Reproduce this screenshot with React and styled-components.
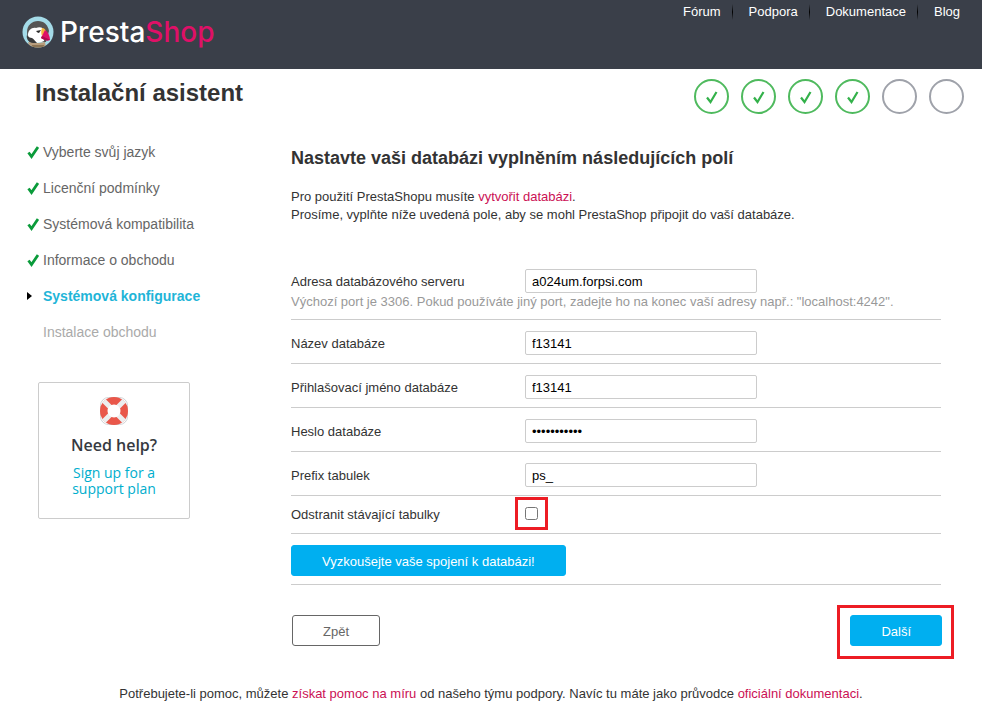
import { useState } from "react";
import styled, { createGlobalStyle } from "styled-components";

const nav_links = ["Fórum", "Podpora", "Dokumentace", "Blog"];

const steps = [
  { name: "Vyberte svůj jazyk", status: "done" },
  { name: "Licenční podmínky", status: "done" },
  { name: "Systémová kompatibilita", status: "done" },
  { name: "Informace o obchodu", status: "done" },
  { name: "Systémová konfigurace", status: "active" },
  { name: "Instalace obchodu", status: "waiting" },
];

const fields = [
  {
    id: "dbServer",
    label: "Adresa databázového serveru",
    value: "a024um.forpsi.com",
    hint: 'Výchozí port je 3306. Pokud používáte jiný port, zadejte ho na konec vaší adresy např.: "localhost:4242".',
  },
  { id: "dbName", label: "Název databáze", value: "f13141" },
  { id: "dbLogin", label: "Přihlašovací jméno databáze", value: "f13141" },
  { id: "dbPassword", label: "Heslo databáze", value: "abcdefghijk", type: "password" },
  { id: "dbPrefix", label: "Prefix tabulek", value: "ps_" },
];

function Puffin() {
  return (
    <svg width="32" height="32" viewBox="0 0 32 32" aria-hidden="true">
      <defs>
        <clipPath id="puffinClip">
          <circle cx="16" cy="16" r="15.5" />
        </clipPath>
      </defs>
      <g clipPath="url(#puffinClip)">
        <rect width="32" height="32" fill="#a4dbe8" />
        <path d="M5 16C5 9 10 5 16 5s10 4 11 10l-3 11H8c-2-2-3-6-3-10z" fill="#565554" />
        <path d="M6 19c0-5 4-8 8-7 4-2 8 0 9 3l-1 10c-4 2-8 2-11 1-3-2-5-4-5-7z" fill="#fff" />
        <path d="M5 19c1 2 3 3 5 3 2 1 3 3 5 5H9c-3-2-5-5-4-8z" fill="#3a3a3b" />
        <path d="M14 15l5-1-2 3c-1 0-2-1-3-2z" fill="#2b2b2b" />
        <path d="M20 12c2 0 3 1 4 3l-4 5c-1-2-1-6 0-8z" fill="#f4b53c" />
        <path d="M23 14c3 2 5 6 5 10-3 1-6 0-9-2z" fill="#df1067" />
        <path d="M20 20c2 1 5 2 8 4-3 1-6 0-9-2z" fill="#ae0c50" />
        <path d="M6 26l5 1c4 0 8 0 12-1l1 6H8z" fill="#b89d7d" />
        <path d="M10 29h12v3H10z" fill="#8c7454" />
      </g>
    </svg>
  );
}

function Lifebuoy() {
  return (
    <svg width="28" height="28" viewBox="0 0 28 28" aria-hidden="true">
      <rect x="0.500" y="0.500" width="27" height="27" rx="8" fill="#fff" stroke="#d0d3d6" />
      <circle cx="14" cy="14" r="10" fill="none" stroke="#e9574a" strokeWidth="8" />
      <path d="M4 4l20 20M24 4L4 24" stroke="#eceeef" strokeWidth="5" />
      <circle cx="14" cy="14" r="6.500" fill="#fff" />
    </svg>
  );
}

function App() {
  const [values, setValues] = useState(
    Object.fromEntries(fields.map((field) => [field.id, field.value]))
  );
  const [removeTables, setRemoveTables] = useState(false);

  return (
    <>
      <GlobalStyle />
      <Header>
        <Brand href="#">
          <Puffin />
          <BrandName>
            Presta<span>Shop</span>
          </BrandName>
        </Brand>
        <Nav>
          {nav_links.map((link) => (
            <NavItem key={link}>
              <a href="#">{link}</a>
            </NavItem>
          ))}
        </Nav>
      </Header>

      <TitleBar>
        <h1>Instalační asistent</h1>
        <Progress>
          {steps.map((step, index) => (
            <Circle key={step.name} $done={index < 4}>
              {index < 4 && (
                <svg width="12" height="14" viewBox="0 0 12 14">
                  <path d="M1 7.500l3.500 4.500L10.500 2" fill="none" stroke="#33b14a" strokeWidth="2.200" />
                </svg>
              )}
            </Circle>
          ))}
        </Progress>
      </TitleBar>

      <Body>
        <aside>
          <StepList>
            {steps.map((step) => (
              <Step key={step.name} $status={step.status}>
                <StepIcon>
                  {step.status === "done" && (
                    <svg width="12" height="13" viewBox="0 0 12 13">
                      <path d="M1.500 6.500l3 4L11 1" fill="none" stroke="#0a9b3a" strokeWidth="2.800" />
                    </svg>
                  )}
                  {step.status === "active" && (
                    <svg width="5" height="8" viewBox="0 0 5 8">
                      <path d="M0 0l5 4-5 4z" fill="#000" />
                    </svg>
                  )}
                </StepIcon>
                {step.name}
              </Step>
            ))}
          </StepList>
          <HelpBox>
            <Lifebuoy />
            <strong>Need help?</strong>
            <a href="#">Sign up for a support plan</a>
          </HelpBox>
        </aside>

        <main>
          <SectionTitle>Nastavte vaši databázi vyplněním následujících polí</SectionTitle>
          <Intro>
            Pro použití PrestaShopu musíte <PinkLink href="#">vytvořit databázi</PinkLink>.
            <br />
            Prosíme, vyplňte níže uvedená pole, aby se mohl PrestaShop připojit do vaší databáze.
          </Intro>

          <form onSubmit={(e) => e.preventDefault()}>
            {fields.map((field) => (
              <Row key={field.id}>
                <label htmlFor={field.id}>{field.label}</label>
                <TextInput
                  id={field.id}
                  type={field.type || "text"}
                  autoComplete="off"
                  value={values[field.id]}
                  onChange={(e) => setValues({ ...values, [field.id]: e.target.value })}
                />
                {field.hint && <Hint>{field.hint}</Hint>}
              </Row>
            ))}
            <CheckRow>
              <label htmlFor="removeTables">Odstranit stávající tabulky</label>
              <CheckMark>
                <Checkbox
                  id="removeTables"
                  type="checkbox"
                  checked={removeTables}
                  onChange={(e) => setRemoveTables(e.target.checked)}
                />
              </CheckMark>
            </CheckRow>
            <TestRow>
              <Button type="button">Vyzkoušejte vaše spojení k databázi!</Button>
            </TestRow>
            <Actions>
              <BackButton type="button">Zpět</BackButton>
              <NextMark>
                <Button type="submit">Další</Button>
              </NextMark>
            </Actions>
          </form>
        </main>
      </Body>

      <Footer>
        Potřebujete-li pomoc, můžete <PinkLink href="#">získat pomoc na míru</PinkLink> od našeho týmu
        podpory. Navíc tu máte jako průvodce <PinkLink href="#">oficiální dokumentaci</PinkLink>.
      </Footer>
    </>
  );
}

const GlobalStyle = createGlobalStyle`
* {
  box-sizing: border-box;
}
body {
  margin: 0;
  background: #fff;
  color: #333;
  font: 13px/18px "Liberation Sans", Arial, sans-serif;
}
h1, h2, p, ul, ol {
  margin: 0;
  padding: 0;
}
ul, ol {
  list-style: none;
}
a {
  text-decoration: none;
}
button, input {
  font: inherit;
}
`

const Header = styled.header`
display: flex;
justify-content: space-between;
align-items: flex-start;
height: 69px;
padding: 0 22px;
background: #3a3f49;
`

const Brand = styled.a`
display: flex;
align-items: center;
gap: 6px;
padding-top: 16px;
color: #fff;
`

const BrandName = styled.span`
font: 500 28px/32px Inter, sans-serif;

span {
  color: #df1067;
}
`

const Nav = styled.ul`
display: flex;
padding-top: 3px;
`

const NavItem = styled.li`
display: flex;
align-items: center;

a {
  color: #fff;
}

&:not(:last-child)::after {
  content: "";
  width: 1px;
  height: 16px;
  margin: 0 16px 0 11px;
  background: linear-gradient(transparent, #000, transparent);
}
`

const TitleBar = styled.div`
display: flex;
justify-content: space-between;
align-items: flex-start;
padding: 10px 18px 20px 35px;

h1 {
  font-size: 24px;
  line-height: 28px;
}
`

const Progress = styled.ol`
display: flex;
gap: 12px;
`

const Circle = styled.li`
display: flex;
align-items: center;
justify-content: center;
width: 35px;
height: 35px;
border: 2px solid ${(props) => (props.$done ? "#4fba5e" : "#9fa2aa")};
border-radius: 50%;
`

const Body = styled.div`
display: grid;
grid-template-columns: 264px 1fr;
padding: 0 41px 0 27px;

main {
  padding-top: 14px;
}
`

const StepList = styled.ol`
font-size: 14px;
line-height: 36px;
`

const stepColors = { done: "#666", active: "#1fb5d8", waiting: "#aaa" };

const Step = styled.li`
display: flex;
color: ${(props) => stepColors[props.$status]};
font-weight: ${(props) => (props.$status === "active" ? "bold" : "normal")};
`

const StepIcon = styled.span`
display: flex;
align-items: center;
width: 16px;
`

const HelpBox = styled.div`
display: flex;
flex-direction: column;
align-items: center;
width: 152px;
margin: 32px 0 0 11px;
padding: 14px 28px 21px;
border: 1px solid #ccc;
border-radius: 2px;
text-align: center;
font: 14px/16px "Open Sans", sans-serif;

strong {
  margin: 10px 0;
  color: #363a41;
  font-size: 16px;
  font-weight: 600;
  line-height: 20px;
}

a {
  color: #00aecd;
}
`

const SectionTitle = styled.h2`
font-size: 18px;
line-height: 20px;
`

const Intro = styled.p`
margin: 20px 0 34px;
`

const PinkLink = styled.a`
color: #cb1054;
`

const Row = styled.div`
display: grid;
grid-template-columns: 234px 232px 1fr;
align-items: center;
padding: 11px 0 8px;
border-bottom: 1px solid #ccc;

label {
  padding-top: 2px;
}
`

const TextInput = styled.input`
height: 24px;
padding: 0 6px;
border: 1px solid #ccc;
border-radius: 2px;
background: #fff;
color: #000;
`

const Hint = styled.p`
grid-column: 1 / -1;
color: #999;
`

const CheckRow = styled(Row)`
padding: 1px 0 3px;
`

const CheckMark = styled.span`
display: flex;
align-items: center;
justify-content: center;
width: 33px;
height: 33px;
margin-left: -10px;
border: 3px solid #ed1c24;
`

const Checkbox = styled.input`
width: 13px;
height: 13px;
margin: 0;
`

const TestRow = styled.div`
padding: 11px 0 8px;
border-bottom: 1px solid #ccc;
`

const Button = styled.button`
display: block;
height: 31px;
padding: 2px 30px 0;
border: 1px solid #00aff0;
border-radius: 3px;
background: #00aff0;
color: #fff;
cursor: pointer;
`

const BackButton = styled(Button)`
margin: 10px 0 0 1px;
border-color: #666;
background: #fff;
color: #666;
`

const NextMark = styled.div`
margin-right: -13px;
padding: 7px 9px 10px 10px;
border: 3px solid #ed1c24;
`

const Actions = styled.div`
display: flex;
justify-content: space-between;
align-items: flex-start;
padding-top: 20px;
`

const Footer = styled.footer`
padding: 26px 0 6px;
text-align: center;
`

export default App
